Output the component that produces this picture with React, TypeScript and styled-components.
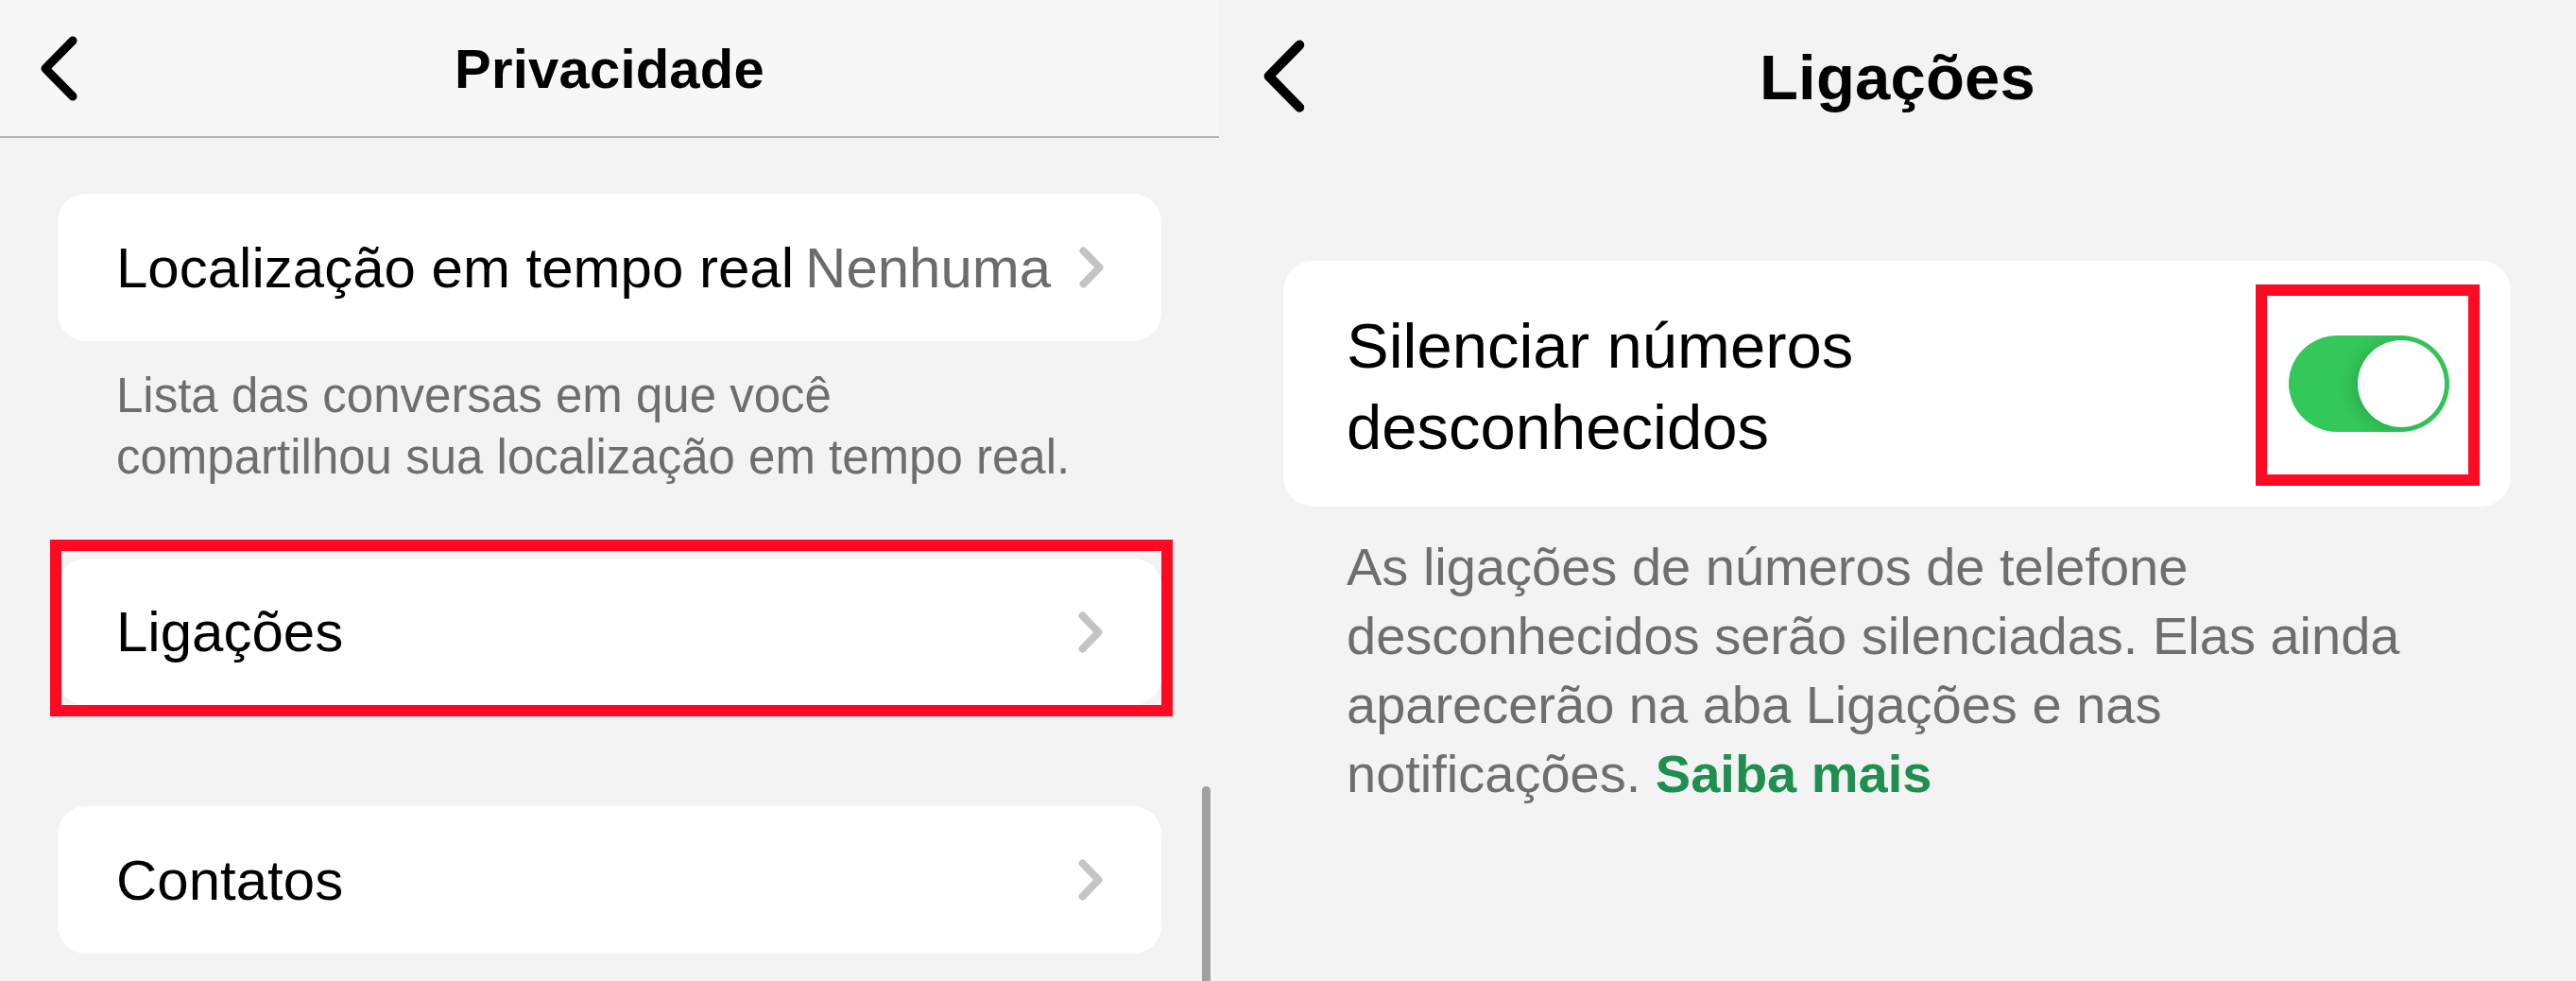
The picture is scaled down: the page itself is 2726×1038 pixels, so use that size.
import styled, { createGlobalStyle } from "styled-components";

const GlobalStyle = createGlobalStyle`
  html, body {
    margin: 0;
    padding: 0;
    background: #f3f3f3;
    overflow: hidden;
  }
  body {
    font-family: "Liberation Sans", Arial, sans-serif;
    -webkit-font-smoothing: antialiased;
  }
`;

const Page = styled.div`
  display: flex;
  width: 2726px;
  height: 1038px;
  overflow: hidden;
`;

const Panel = styled.section<{ width?: number }>`
  position: relative;
  display: flex;
  flex-direction: column;
  width: ${({ width }) => (width ? `${width}px` : "auto")};
  flex: ${({ width }) => (width ? "none" : "1")};
  height: 100%;
  background: #f3f3f3;
  overflow: hidden;
`;

const Header = styled.header<{ height: number; divider?: boolean }>`
  display: grid;
  grid-template-columns: 1fr auto 1fr;
  align-items: center;
  height: ${({ height }) => height}px;
  flex: none;
  box-sizing: border-box;
  background: ${({ divider }) => (divider ? "#f7f7f7" : "#f3f3f3")};
  border-bottom: ${({ divider }) => (divider ? "2px solid #b4b4b4" : "none")};
`;

const BackButton = styled.button<{ offset: number }>`
  justify-self: start;
  display: flex;
  align-items: center;
  padding: 0 0 0 ${({ offset }) => offset}px;
  border: none;
  background: none;
  color: #000;
`;

const Title = styled.h1<{ size: number }>`
  margin: 0;
  font-size: ${({ size }) => size}px;
  font-weight: 700;
  color: #000;
  letter-spacing: 0.2px;
`;

const Content = styled.div<{ pad: string }>`
  display: flex;
  flex-direction: column;
  padding: ${({ pad }) => pad};
`;

const Card = styled.div<{ height: number; mt?: number; radius?: number; pad?: string }>`
  position: relative;
  display: flex;
  align-items: center;
  height: ${({ height }) => height}px;
  margin-top: ${({ mt }) => mt ?? 0}px;
  padding: ${({ pad }) => pad ?? "0 62px"};
  box-sizing: border-box;
  background: #fff;
  border-radius: ${({ radius }) => radius ?? 30}px;
`;

const RowLabel = styled.span`
  font-size: 60px;
  color: #000;
  white-space: nowrap;
`;

const MultiLabel = styled.span`
  flex: 1;
  padding-top: 5px;
  font-size: 67px;
  line-height: 86px;
  color: #000;
`;

const RowValue = styled.span`
  margin-left: 12px;
  font-size: 60px;
  color: #6b6b6b;
  white-space: nowrap;
`;

const ChevronSlot = styled.span`
  display: flex;
  margin-left: auto;
  padding-left: 30px;
`;

const Note = styled.p<{ size: number; lh: number; mt: number; pad: string; width: number }>`
  margin: ${({ mt }) => mt}px 0 0;
  padding: ${({ pad }) => pad};
  width: ${({ width }) => width}px;
  font-size: ${({ size }) => size}px;
  line-height: ${({ lh }) => lh}px;
  color: #6e6e6e;
`;

const Link = styled.a`
  color: #1f8f4f;
  font-weight: 700;
  text-decoration: none;
`;

const Highlight = styled.span<{ inset: string }>`
  position: absolute;
  inset: ${({ inset }) => inset};
  border: 12px solid #ff0a22;
  pointer-events: none;
`;

const ToggleWrap = styled.span`
  position: relative;
  display: flex;
  flex: none;
`;

const Track = styled.span<{ on: boolean }>`
  position: relative;
  display: block;
  width: 170px;
  height: 102px;
  border-radius: 51px;
  background: ${({ on }) => (on ? "#34c759" : "#e5e5ea")};
`;

const Knob = styled.span<{ on: boolean }>`
  position: absolute;
  top: 5px;
  ${({ on }) => (on ? "right: 5px;" : "left: 5px;")}
  width: 92px;
  height: 92px;
  border-radius: 50%;
  background: #fff;
  box-shadow: -6px 2px 14px rgba(0, 60, 20, 0.18);
`;

const Scrollbar = styled.span`
  position: absolute;
  right: 9px;
  top: 832px;
  bottom: -10px;
  width: 9px;
  border-radius: 5px;
  background: #a0a0a0;
`;

function BackChevron({ scale }: { scale: number }) {
  return (
    <svg width={40 * scale} height={69 * scale} viewBox="0 0 40 69" fill="none">
      <path
        d="M35 5 L6 34.5 L35 64"
        stroke="currentColor"
        strokeWidth={9}
        strokeLinecap="round"
        strokeLinejoin="round"
      />
    </svg>
  );
}

function DisclosureChevron() {
  return (
    <svg width={26} height={44} viewBox="0 0 26 44" fill="none">
      <path
        d="M4.5 4.5 L21.5 22 L4.5 39.5"
        stroke="#c4c4c6"
        strokeWidth={8}
        strokeLinecap="round"
        strokeLinejoin="round"
      />
    </svg>
  );
}

function Toggle({ on }: { on: boolean }) {
  return (
    <Track on={on}>
      <Knob on={on} />
    </Track>
  );
}

function PrivacyScreen() {
  return (
    <Panel width={1290}>
      <Header height={146} divider>
        <BackButton offset={42}>
          <BackChevron scale={1} />
        </BackButton>
        <Title size={58}>Privacidade</Title>
        <span />
      </Header>
      <Content pad="59px 61px 0">
        <Card height={156}>
          <RowLabel>Localização em tempo real</RowLabel>
          <RowValue>Nenhuma</RowValue>
          <ChevronSlot>
            <DisclosureChevron />
          </ChevronSlot>
        </Card>
        <Note size={51} lh={65} mt={25} pad="0 0 0 62px" width={1040}>
          Lista das conversas em que você compartilhou sua localização em tempo real.
        </Note>
        <Card height={155} mt={75}>
          <RowLabel>Ligações</RowLabel>
          <ChevronSlot>
            <DisclosureChevron />
          </ChevronSlot>
          <Highlight inset="-20px -12px -12px -8px" />
        </Card>
        <Card height={156} mt={107}>
          <RowLabel>Contatos</RowLabel>
          <ChevronSlot>
            <DisclosureChevron />
          </ChevronSlot>
        </Card>
      </Content>
      <Scrollbar />
    </Panel>
  );
}

function CallsScreen() {
  return (
    <Panel>
      <Header height={162}>
        <BackButton offset={46}>
          <BackChevron scale={1.12} />
        </BackButton>
        <Title size={67}>Ligações</Title>
        <span />
      </Header>
      <Content pad="114px 69px 0 68px">
        <Card height={260} radius={32} pad="0 65px 0 67px">
          <MultiLabel>
            Silenciar números
            <br />
            desconhecidos
          </MultiLabel>
          <ToggleWrap>
            <Toggle on />
            <Highlight inset="-54px -32px -57px -35px" />
          </ToggleWrap>
        </Card>
        <Note size={56} lh={73} mt={27} pad="0 0 0 67px" width={1166}>
          As ligações de números de telefone desconhecidos serão silenciadas. Elas ainda
          aparecerão na aba Ligações e nas notificações. <Link href="#">Saiba mais</Link>
        </Note>
      </Content>
    </Panel>
  );
}

export default function App() {
  return (
    <>
      <GlobalStyle />
      <Page>
        <PrivacyScreen />
        <CallsScreen />
      </Page>
    </>
  );
}
